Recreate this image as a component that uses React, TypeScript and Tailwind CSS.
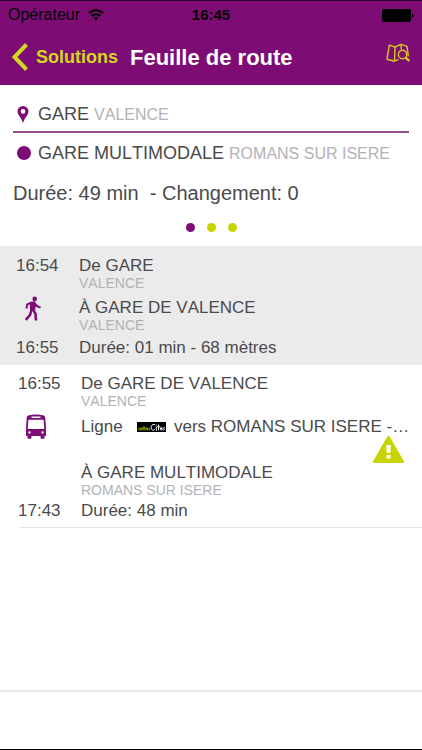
import type { ReactNode } from 'react';

type Leg = {
  id: number;
  mode: 'walk' | 'bus';
  start: string;
  end: string;
  from: string;
  fromCity: string;
  to: string;
  toCity: string;
  duration: string;
  direction?: string;
  warning?: boolean;
};

const legs: Leg[] = [
  {
    id: 1,
    mode: 'walk',
    start: '16:54',
    end: '16:55',
    from: 'GARE',
    fromCity: 'VALENCE',
    to: 'GARE DE VALENCE',
    toCity: 'VALENCE',
    duration: 'Durée: 01 min - 68 mètres',
  },
  {
    id: 2,
    mode: 'bus',
    start: '16:55',
    end: '17:43',
    from: 'GARE DE VALENCE',
    fromCity: 'VALENCE',
    to: 'GARE MULTIMODALE',
    toCity: 'ROMANS SUR ISERE',
    duration: 'Durée: 48 min',
    direction: 'vers ROMANS SUR ISERE -…',
    warning: true,
  },
];

function WifiIcon() {
  return (
    <svg width="16" height="12" viewBox="0 0 16 12" fill="none" stroke="#000" strokeWidth="2">
      <path d="M1 4.2a10 10 0 0 1 14 0" />
      <path d="M3.6 7a6.2 6.2 0 0 1 8.8 0" />
      <path d="M5.6 9.2a3.4 3.4 0 0 1 4.8 0L8 11.8z" fill="#000" stroke="none" />
    </svg>
  );
}

function BatteryIcon() {
  return (
    <svg width="32" height="13" viewBox="0 0 32 13" fill="#000">
      <rect width="29" height="13" rx="2" />
      <path d="M30 4.5c1.2.4 1.6 1.1 1.6 2s-.4 1.600-1.600 2z" />
    </svg>
  );
}

function MapIcon() {
  return (
    <svg width="24" height="20" viewBox="0 0 24 20" fill="none" stroke="#d2c81e" strokeWidth="1.4" strokeLinejoin="round">
      <path d="M12.500 16.400 8.500 18.200 1 16.200 3.300 2.200 9 4l6-2.600 6 1.900 1.400 10" />
      <path d="M9 4 8.500 18M15 1.400l.3 5" />
      <circle cx="16.500" cy="11.500" r="4.200" />
      <path d="m19.600 14.600 3.600 3.400" strokeWidth="2.400" />
    </svg>
  );
}

function PinIcon() {
  return (
    <svg width="12" height="17" viewBox="0 0 12 17" fill="#7e0c75">
      <path fillRule="evenodd" d="M6 0a5.500 5.500 0 0 0-5.500 5.500C.5 8.500 4 11 6 17c2-6 5.500-8.500 5.500-11.500A5.500 5.500 0 0 0 6 0zm0 3.100a2.300 2.300 0 1 1 0 4.600 2.300 2.300 0 0 1 0-4.600z" />
    </svg>
  );
}

function WalkIcon() {
  return (
    <svg width="18" height="25" viewBox="0 0 18 25" fill="none" stroke="#7e0c75" strokeLinejoin="round">
      <circle cx="10.700" cy="2.900" r="2.300" fill="#7e0c75" stroke="none" />
      <path d="M6.200 6.200 10.800 5.800 11.400 9 10.600 14.500 6.500 14.500 6.300 10z" fill="#7e0c75" />
      <path d="M6.700 6.800 3.300 8.300 2.400 12.500" strokeWidth="2" />
      <path d="m10.700 7.300 2.200 2.700 3.700 1.700" strokeWidth="2" />
      <path d="M7.500 14 6 19l-4.200 4.800M9.500 14l2 4 .5 6.500" strokeWidth="2.600" />
    </svg>
  );
}

function BusIcon() {
  return (
    <svg width="20" height="25" viewBox="0 0 20 25" fill="#7e0c75">
      <path
        fillRule="evenodd"
        d="M3 1.200C6.500.2 13.500.2 17 1.200c1.600.5 2.200 1.400 2.300 2.800L20 15v6c0 .6-.4 1-1 1H1c-.6 0-1-.4-1-1v-6L.7 4C.8 2.600 1.400 1.700 3 1.200zM5.500 2.600v1.300h9V2.600zM2.400 5.800 1.800 15h16.400L17.600 5.800zM3.500 17.300a1.200 1.200 0 1 0 0 2.400 1.200 1.200 0 0 0 0-2.400zm13 0a1.200 1.200 0 1 0 0 2.400 1.200 1.200 0 0 0 0-2.400z"
      />
      <rect x="1.500" y="21" width="4" height="3.700" rx="1" />
      <rect x="14.500" y="21" width="4" height="3.700" rx="1" />
    </svg>
  );
}

function WarningIcon() {
  return (
    <svg width="31" height="27" viewBox="0 0 31 27" fill="#c8d400">
      <path d="M14.200.8c.6-1 2-1 2.600 0L30.800 25c.5 1-.1 2-1.200 2H1.400C.3 27-.3 26 .2 25z" />
      <path d="M13.200 9h4.600l-.5 8h-3.600zM13.500 19h4v3.500h-4z" fill="#fff" />
    </svg>
  );
}

function LineLogo() {
  return (
    <span className="flex h-[10px] w-[29px] shrink-0 items-center justify-center bg-black">
      <svg width="27" height="9" viewBox="0 0 27 9" fill="none" strokeLinecap="round">
        <path d="M1 5v2.200M2.800 5v2l1.400-.2V5M6 3.500v3.700M5.200 5H7M8 7V5l1.500.3V7M11.500 5.200 10.500 6l1.400 1" stroke="#b5c400" strokeWidth=".9" />
        <path d="M16.500 1.500C14 1 12.800 3 13.200 5.300c.3 2 2 2.200 3.300 1.400M18.300 4v3.200M18.300 2v.2M20.500 2v5M19.700 3.800h2.200M22.400 5.500h1.800c-.2-1.500-2-1.200-1.900.4.200 1.400 1.300 1.300 2 .9M26.300 4.500c-1.400 0-1 1-.2 1.300s.3 1.400-.9 1.200" stroke="#fff" />
      </svg>
    </span>
  );
}

function Place({ icon, name, city }: { icon: ReactNode; name: string; city: string }) {
  return (
    <div className="flex h-10 items-center">
      <span className="flex w-[25px] shrink-0 pl-1">{icon}</span>
      <p className="text-[18px] whitespace-nowrap">
        {name} <span className="text-[16px] text-[#b2b2b6]">{city}</span>
      </p>
    </div>
  );
}

function LegRow({ leg }: { leg: Leg }) {
  const walking = leg.mode === 'walk';

  return (
    <li className={walking ? 'flex bg-[#ebebeb] pt-[10px] pb-[7px] pl-4' : 'flex pt-[9px] pb-[6px] pl-[18px]'}>
      <div className="flex w-[63px] shrink-0 flex-col leading-5">
        <time>{leg.start}</time>
        <span className="mt-5 pl-2">{walking ? <WalkIcon /> : <BusIcon />}</span>
        <time className="mt-auto">{leg.end}</time>
      </div>
      <div className="min-w-0 flex-1 leading-5">
        <p>De {leg.from}</p>
        <p className="text-[14px] leading-[14px] text-[#b2b2b6]">{leg.fromCity}</p>
        {leg.direction && (
          <div className="mt-[9px] flex items-center">
            <span className="w-14 shrink-0">Ligne</span>
            <LineLogo />
            <span className="ml-2 whitespace-nowrap">{leg.direction}</span>
          </div>
        )}
        {leg.warning ? (
          <div className="flex h-[26px] items-end justify-end pr-[18px]">
            <WarningIcon />
          </div>
        ) : (
          <div className="h-2" />
        )}
        <p>À {leg.to}</p>
        <p className="text-[14px] leading-[14px] text-[#b2b2b6]">{leg.toCity}</p>
        <p className={walking ? 'mt-[6px]' : 'mt-1'}>{leg.duration}</p>
      </div>
    </li>
  );
}

function App() {
  return (
    <div className="flex min-h-screen flex-col border-b border-black bg-white font-['Liberation_Sans',Arial,sans-serif] text-[#4a4a4c] [font-kerning:none]">
      <header className="border-t border-[#2a0428] bg-[#7e0c75]">
        <div className="grid h-7 grid-cols-3 items-center px-2 text-[16px] text-black">
          <div className="flex items-center gap-2">
            <span>Opérateur</span>
            <WifiIcon />
          </div>
          <span className="text-center text-[15px] font-bold">16:45</span>
          <div className="flex justify-end">
            <BatteryIcon />
          </div>
        </div>
        <div className="flex h-14 items-center px-3">
          <button type="button" className="flex items-center gap-2 text-[18px] font-bold text-[#d2d81e]">
            <svg width="16" height="28" viewBox="0 0 16 28" fill="none" stroke="#d2d81e" strokeWidth="4">
              <path d="M14.500 1.500 2.500 14l12 12.500" />
            </svg>
            Solutions
          </button>
          <h1 className="ml-3 flex-1 text-[22px] font-bold whitespace-nowrap text-white">Feuille de route</h1>
          <button type="button" aria-label="Carte" className="mb-2">
            <MapIcon />
          </button>
        </div>
      </header>

      <section className="px-[13px] pt-[9px]">
        <Place icon={<PinIcon />} name="GARE" city="VALENCE" />
        <div className="-mt-[3px] border-t-2 border-[#954f8d]" />
        <Place icon={<span className="size-[14px] rounded-full bg-[#7e0c75]" />} name="GARE MULTIMODALE" city="ROMANS SUR ISERE" />
        <p className="mt-2 text-[20px] leading-6 whitespace-pre">Durée: 49 min  - Changement: 0</p>
        <div className="flex h-[41px] items-center justify-center gap-3 pt-1">
          <span className="size-[9px] rounded-full bg-[#7e0c75]" />
          <span className="size-[9px] rounded-full bg-[#c8d400]" />
          <span className="size-[9px] rounded-full bg-[#c8d400]" />
        </div>
      </section>

      <ul className="text-[17px]">
        {legs.map(leg => (
          <LegRow key={leg.id} leg={leg} />
        ))}
      </ul>
      <div className="ml-5 border-t border-[#e2e2e4]" />

      <footer className="mt-auto h-[59px] border-t-2 border-[#e8e8e8]" />
    </div>
  );
}

export default App;
